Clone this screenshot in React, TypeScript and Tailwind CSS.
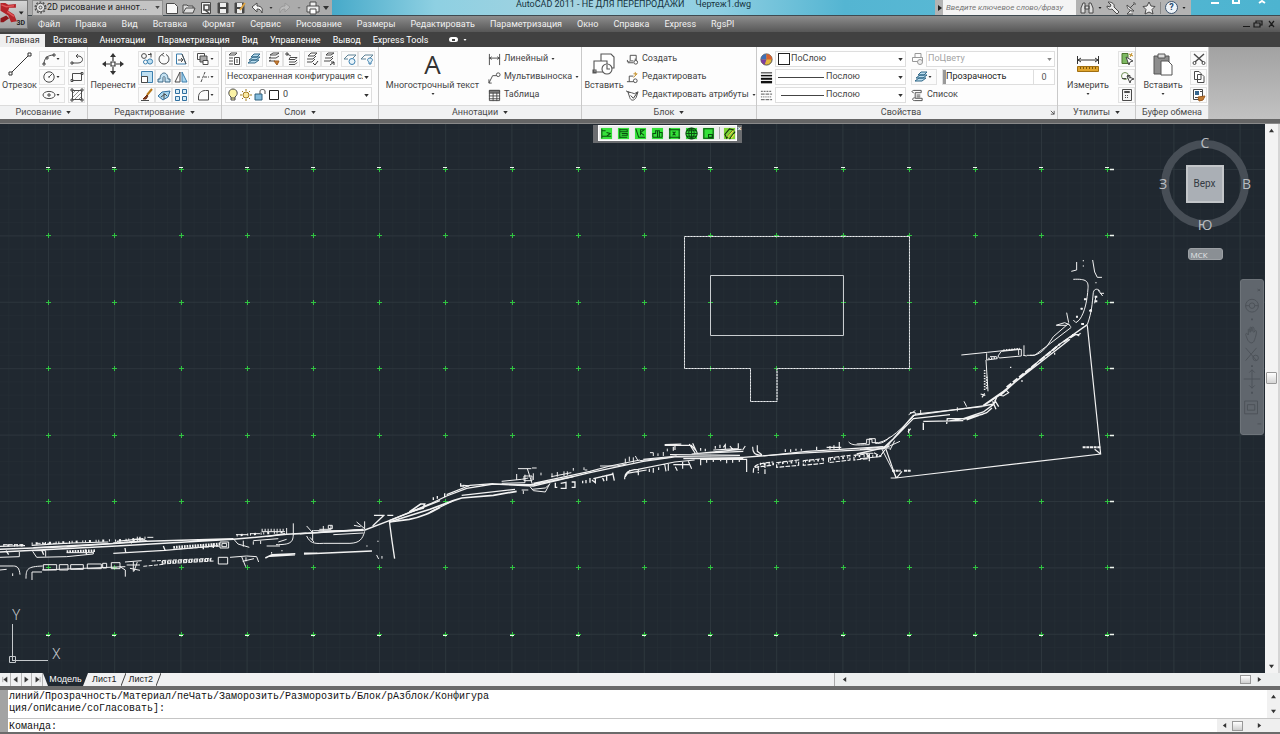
import type { ReactNode } from "react";

const menuItems = [
  "Файл", "Правка", "Вид", "Вставка", "Формат", "Сервис", "Рисование", "Размеры",
  "Редактировать", "Параметризация", "Окно", "Справка", "Express", "RgsPl",
];

const ribbonTabs = ["Вставка", "Аннотации", "Параметризация", "Вид", "Управление", "Вывод", "Express Tools"];

const gridX = Array.from({ length: 17 }, (_, i) => Math.round(48.2 + i * 66.2));
const gridY = Array.from({ length: 8 }, (_, i) => Math.round(169 + i * 66.4));

function Icon({ children, className = "h-[14px] w-[14px]" }: { children: ReactNode; className?: string }) {
  return (
    <svg viewBox="0 0 14 14" className={`shrink-0 ${className}`} fill="none" stroke="#4a4a4a" strokeWidth="1" aria-hidden="true">
      {children}
    </svg>
  );
}

function Caret({ className = "h-[3px] w-[5px] text-[#333]" }: { className?: string }) {
  return (
    <svg viewBox="0 0 6 4" className={`shrink-0 ${className}`} fill="currentColor" aria-hidden="true">
      <path d="M0 0H6L3 4Z" />
    </svg>
  );
}

const icons = {
  arc: <path d="M2 12C2 6 6 3 12 3M1 11h2v2H1zM11 2h2v2h-2zM4 5h2v2H4z" />,
  circle: <><circle cx="7" cy="7" r="5.2" /><path d="M7 7l3-3M6 7h2" /></>,
  ellipse: <><ellipse cx="7" cy="7" rx="6" ry="3.6" /><path d="M7 5v4M5 7h4" /></>,
  pline: <path d="M2 11h6c6 0 6-7 0-7H6M1 10h2v2H1zM8 2L6 4l2 2" />,
  rect: <path d="M2.500 3.500h9v7h-9zM1 9.500h2v2H1zM11 2.500h2v2h-2z" />,
  hatch: <><path d="M2.500 2.500h9v9h-9z" /><path d="M2 6l4-4M2 10l8-8M4 12l8-8M8 12l4-4" strokeWidth=".6" /><path d="M1 1h2v2H1zM11 1h2v2h-2zM1 11h2v2H1zM11 11h2v2h-2z" /></>,
  copy: <><circle cx="4" cy="4" r="2.400" /><path d="M8 2.500h3v3M10 1l2 1.500" /><g stroke="#3c7fae"><circle cx="5.500" cy="10" r="2" /><circle cx="10" cy="9.500" r="2.600" fill="#bfe0f2" /></g></>,
  rotate: <path d="M5 2.500A5 5 0 1 0 9 2.500M7 1L5 2.500l2 2" />,
  stretch: <><path d="M2.500 2v10H12L8 2z" stroke="#3c7fae" /><path d="M8 2l4 10M4 8h5M7 6l2 2-2 2" /></>,
  overlap: <><path d="M1.500 1.500h7v6h-7z" /><path d="M4 4h7v6H4z" fill="#aaa" /><path d="M7 8.500h5v4H7z" fill="#fff" /></>,
  scale: <><path d="M1.500 1.500h11v11h-11z" fill="#bfe0f2" stroke="#3c7fae" /><path d="M1.500 6.500h6v6h-6z" fill="#fff" /></>,
  offset: <><path d="M1 12V9h2C3 1 11 1 11 9h2v3H8V8c0-2-2-2-2 0v4z" fill="#c6e3f3" stroke="#3a6684" /></>,
  mirror: <><path d="M6 2v10H1z" /><path d="M8 2v10h5z" fill="#a9d6ee" stroke="#3c7fae" /></>,
  trim: <path d="M1 7h4M8 7h5M5 12L9 2" strokeDasharray="3 1" />,
  erase: <><path d="M12 1L7 7" stroke="#b87818" strokeWidth="2" /><path d="M7 7l-4 4h3l2-3z" fill="#8a3d1d" stroke="#6b2d12" /><path d="M1 12.500h8" /></>,
  explode: <><path d="M1 8l4-4 8-1-2 6-5 3z" fill="#a9d6ee" stroke="#2f6f9f" /><path d="M4 9l4-3 2 2M7 5v6" /></>,
  array: <g fill="#d6ebf6" stroke="#2f6f9f"><path d="M1.500 1.500h4v4h-4zM8.500 1.500h4v4h-4zM1.500 8.500h4v4h-4zM8.500 8.500h4v4h-4z" /></g>,
  fillet: <path d="M2.500 12V9c0-4 3-6.500 7-6.500h3V12z" />,
  layer1: <><path d="M2 3l2-2h6L8 3zM2 6h4M2 9h4M2 12h4" /><path d="M7.500 5.500h5v7h-5z" fill="#fff" /><path d="M9 8h2M9 10h2" /></>,
  layer2: <g stroke="#2f6787" fill="#b9dcee"><path d="M1 11l4-3h7l-4 3zM2 8l4-3h7L9 8zM4 5l3-3h6l-3 3z" /></g>,
  layer3: <><path d="M2 3l3-2h6L8 3zM1 6l2-1M1 9l2-1M1 6h7l3-2M1 9h6" /><path d="M6 9h5l-2 4z" fill="#c87f35" stroke="#9b5a1f" /></>,
  layer4: <path d="M5 5.500h7l-2 2H4zM4 10h6l2-2M4 12.500h6l2-2M6 4L2 2M1 1h2v2H1z" />,
  layer5: <><path d="M3 4l3-3h6L9 4zM2 7h6l3-3M2 10h5l3-3" /><path d="M8 11l2 2 3-4" stroke="#333" /></>,
  layer6: <><path d="M4 3l2-2h6l-3 2zM3 6h6l2-2M2 9h6l3-3" /><path d="M8 13l4-3M9 10h3v3" stroke="#333" /></>,
  layer7: <><path d="M1 7l4-4h8l-3 3M1 7h4" stroke="#5c8195" /><circle cx="9" cy="9.500" r="3" fill="#e9f4fa" stroke="#3c7fae" /></>,
  layer8: <><path d="M1 7l4-4h8l-3 3M1 7h5" stroke="#5c8195" /><path d="M10 6c3 0 3 3 1 4v2H9v-2C7 9 7 6 10 6z" fill="#dfeef5" stroke="#3c7fae" /></>,
  linear: <path d="M1.500 1v12M12.500 1v12M1 5.500h12M4 4L2 5.500 4 7M10 4l2 1.500L10 7" />,
  leader: <><path d="M1 13L5 5h4M1 9v4h3" /><circle cx="11" cy="4" r="2" /></>,
  table: <><path d="M1.500 1.500h11v11h-11zM1 4.500h12M1 7.500h12M1 10.500h12M5.500 4v9M9.500 4v9" /><path d="M1.500 1.500h11v2h-11z" fill="#888" /></>,
  blockCreate: <><path d="M4 9.500H1.500v-2M4.500 8V2.500H11V8M4 8.500h4M2 10.500h6M10 6v2" /><circle cx="10.500" cy="10" r="2" fill="#fff" /></>,
  blockEdit: <><path d="M3.500 5.500H8M3.500 5.500v6M1 11.500h7" /><path d="M8 7l4-4M10 1v4M8 3h4" stroke="#c6922d" /><circle cx="10" cy="10.500" r="2" /></>,
  attribute: <><path d="M2 3l2 6c1 4 5 4 7 0l2-6-4 2-3-1zM0 2l4 2" /><path d="M5 7l3 3 4-6" stroke="#2d2d2d" /></>,
  lineweight: <g stroke="#111"><path d="M1 2h12" /><path d="M1 5h12" strokeWidth="1.600" /><path d="M1 8.400h12" strokeWidth="2.200" /><path d="M1 12h12" strokeWidth="2.600" /></g>,
  linetype: <><path d="M1 2.500h12" strokeDasharray="2 1" /><path d="M1 5.500h12M1 11.500h12" strokeDasharray="4 1" /><path d="M1 8.500h12" strokeDasharray="1 1" /></>,
  plot: <g stroke="#999"><path d="M4 5V1.500h6V5M1.500 5.500h10v4h-10z" /><circle cx="9" cy="10" r="2.500" fill="#eee" /></g>,
  list: <path d="M3 1.500h8V4H4.500v6H12v2.500H4c-3 0-3-3 0-3M6 6.500h4M6 8.500h4M3 1.500C0 2 1 4 3 4" />,
  quick: <><path d="M2 1.500h6v10H2z" fill="#7dba62" stroke="#4d742f" /><path d="M6 5l3 8 1-3 3-1z" fill="#fff" /><path d="M12 1l-2 4M9 2l4 2" stroke="#c08a1a" /></>,
  selectAll: <><circle cx="5" cy="6" r="3.500" stroke="#719057" /><path d="M2 8.500h4M7 5.500h3v3M7 6l3 7 1-3 3-1z" fill="#fff" /></>,
  calc: <><path d="M2.500 1.500h9v11h-9z" fill="#f3f3f3" /><path d="M4.500 3.500h5v1h-5z" /><path d="M5 7.500h4M5 9.500h4" strokeDasharray="1 1" /></>,
  cut: <><path d="M2 2l9 8M12 2L3 10" strokeWidth="1.400" /><circle cx="2.500" cy="11" r="1.500" /><circle cx="11.500" cy="11" r="1.500" /></>,
  copyClip: <path d="M2.500 1.500H7l2 2v6H2.500zM5.500 4.500H10l2 2v6H5.500z" fill="#fff" />,
  match: <><path d="M1.500 1.500h9v10h-9z" fill="#fff" /><path d="M3 3h4v4H3z" fill="#35658e" stroke="none" /><path d="M8 3.500h2M3 9.500h4" /><path d="M6 9l7-1-2 4-4 1z" fill="#c27a30" stroke="#9b5a1f" /></>,
};

type IconName = keyof typeof icons;

function Tool({ name, label, wide = false }: { name: IconName; label: string; wide?: boolean }) {
  return (
    <button
      type="button"
      aria-label={label}
      className={`flex h-4 items-center justify-center border border-[#e2e2e2] bg-[#fbfbfb] ${wide ? "w-[26px] justify-between pr-[3px] pl-px" : "w-[17px]"}`}
    >
      <Icon>{icons[name]}</Icon>
      {wide ? <Caret className="h-[2px] w-[4px] text-[#333]" /> : null}
    </button>
  );
}

function LineTool({ name, label, caret = false }: { name: IconName; label: string; caret?: boolean }) {
  return (
    <button type="button" className="flex h-4 items-center gap-[3px] whitespace-nowrap">
      <Icon className="h-[13px] w-[13px]">{icons[name]}</Icon>
      <span>{label}</span>
      {caret ? <Caret className="h-[2px] w-[4px] text-[#333]" /> : null}
    </button>
  );
}

function BigTool({ label, caret = false, className, children }: { label: string; caret?: boolean; className: string; children: ReactNode }) {
  return (
    <button type="button" className={`flex h-[52px] shrink-0 flex-col items-center whitespace-nowrap ${className}`}>
      <span className="flex h-[26px] items-center justify-center">{children}</span>
      <span className="leading-4">{label}</span>
      {caret ? <Caret className="h-[2px] w-[4px] text-[#333]" /> : null}
    </button>
  );
}

function Panel({ title, className, caret = true, launcher = false, children }: { title: string; className: string; caret?: boolean; launcher?: boolean; children: ReactNode }) {
  return (
    <section className={`flex shrink-0 flex-col border-r border-[#c9c9c9] bg-[#fdfdfd] ${className}`}>
      <div className="flex h-[58px] items-start pt-1">{children}</div>
      <h2 className="flex h-[14px] items-center justify-center gap-[5px] border-t border-[#dcdcdc] bg-[#f1f2f3] text-[#4a4a4a]">
        <span className={launcher ? "flex-1 text-center" : ""}>{title}</span>
        {caret ? <Caret /> : null}
        {launcher ? (
          <svg viewBox="0 0 6 6" className="mr-[2px] h-[5px] w-[5px]" stroke="#444" fill="none" aria-hidden="true">
            <path d="M1 1l4 4M5 1v4H1" />
          </svg>
        ) : null}
      </h2>
    </section>
  );
}

function Combo({ label, value, className = "", before, disabled = false, selectClass = "pl-[3px]" }: { label: string; value: string; className?: string; before?: ReactNode; disabled?: boolean; selectClass?: string }) {
  return (
    <div className={`relative flex h-4 items-center border border-[#dedede] bg-white ${className}`}>
      {before}
      <select aria-label={label} disabled={disabled} className={`min-w-0 flex-1 appearance-none bg-transparent disabled:text-[#a5a5a5] disabled:opacity-100 ${selectClass}`}>
        <option>{value}</option>
      </select>
      <Caret className={`pointer-events-none absolute right-[2px] h-[3px] w-[5px] ${disabled ? "text-[#888]" : "text-[#333]"}`} />
    </div>
  );
}

function QuickAccess() {
  return (
    <div className="flex items-center gap-[3px] text-[#333]">
      <Icon><path d="M1.500 2.500h8l3 3v7h-11z" fill="#f8f8f8" /></Icon>
      <Icon><path d="M1 12V4h4l1 1h5v2M1 12l3-5h9l-2 5z" fill="#ddd" /></Icon>
      <Icon><path d="M2.500 1.500h9v11h-9z" fill="#f5f5f5" /><path d="M5 4h5v5H5zM6 9l5 4" strokeWidth="1.600" /></Icon>
      <Icon><path d="M2 2h10v10H2z" fill="#454545" /><path d="M4 2h6v4H4zM4 8h6v4H4z" fill="#eee" stroke="none" /></Icon>
      <Icon><path d="M2 2h9v10H2z" fill="#454545" /><path d="M4 2h5v4H4zM4 8h5v4H4z" fill="#eee" stroke="none" /><path d="M7 9l5-7" stroke="#dca343" strokeWidth="2" /></Icon>
      <Icon><path d="M2 6l5-4v3c5 0 6 3 5 7-1-3-2-4-5-4v3z" fill="#f5f5f5" /></Icon>
      <Caret className="mx-[2px] h-[2px] w-[4px]" />
      <Icon><path d="M12 6L7 2v3C2 5 1 8 2 12c1-3 2-4 5-4v3z" fill="#bbb" stroke="#999" /></Icon>
      <Caret className="mx-[2px] h-[2px] w-[4px] text-[#777]" />
      <Icon><path d="M4 5V1h6v4M1 5h12v6H1z" fill="#eee" /><path d="M4 8h6v5H4z" fill="#fff" /></Icon>
      <Caret className="h-[4px] w-[6px]" />
    </div>
  );
}

function TitleBar() {
  return (
    <header className="flex h-4 items-stretch border-b border-[#3f4a50] bg-[linear-gradient(90deg,#3ea5c6_25%,#8ed0e2_34%,#a5d3e0_45%,#8fcfe2_56%,#54b5d2_66%,#58b8d4_74%,#4db4d0_100%)]">
      <div className="flex w-[332px] items-center bg-[#ababab] pl-8">
        <div className="relative mr-[2px] flex h-4 w-[131px] items-center border border-[#909090] bg-[#c4c4c4]">
          <Icon className="ml-px h-[13px] w-[13px]">
            <circle cx="7" cy="7" r="5.800" strokeDasharray="2 1.640" strokeWidth="1.400" />
            <circle cx="7" cy="7" r="4.500" fill="#e5e5e5" />
            <circle cx="7" cy="7" r="1.600" />
          </Icon>
          <select aria-label="Рабочее пространство" className="min-w-0 flex-1 appearance-none text-[9px] text-[#222]">
            <option>2D рисование и аннот...</option>
          </select>
          <Caret className="pointer-events-none absolute right-[2px] h-[3px] w-[5px]" />
        </div>
        <QuickAccess />
      </div>
      <h1 className="flex flex-1 justify-center gap-[11px] leading-[9px] whitespace-nowrap text-[#16323d]">
        <span>AutoCAD 2011 - НЕ ДЛЯ ПЕРЕПРОДАЖИ</span>
        <span>Чертеж1.dwg</span>
      </h1>
      <div className="flex w-[256px] items-center gap-1 bg-[#b3b3b3] text-[#222]">
        <svg viewBox="0 0 4 6" className="ml-[3px] h-[6px] w-[4px] shrink-0 -mr-[3px]" fill="#222" aria-hidden="true"><path d="M0 0L4 3L0 6Z" /></svg>
        <input
          type="text"
          aria-label="Поиск"
          placeholder="Введите ключевое слово/фразу"
          className="h-full w-[133px] bg-[#f4f4f4] pl-[3px] text-[8px] italic placeholder:text-[#777]"
        />
        <Icon><path d="M1 12V7l2-5h2v10zM13 12V7l-2-5H9v10zM5 5h4v3H5z" fill="#ddd" /></Icon>
        <Caret className="h-[2px] w-[4px]" />
        <Icon><path d="M2 1l3 3-1 2-3-1c0 3 3 4 5 3l5 5 2-2-5-5c1-3-2-5-6-5z" fill="#eee" /></Icon>
        <Icon><path d="M3 4c0 4 3 6 7 6zM6 7l4-4M6 10l-3 3h6M9 2h2v2" fill="#eee" /></Icon>
        <Icon><path d="M7 1l2 4 4 .5-3 3 1 4.500-4-2-4 2 1-4.500-3-3L5 5z" fill="#eee" /></Icon>
        <span className="h-3 w-px bg-[#888]" />
        <span className="flex h-[13px] w-[13px] items-center justify-center rounded-full border border-[#3c536d] bg-[#eef3f8] text-[9px] leading-[11px] font-bold text-[#24496f]">?</span>
        <Caret className="h-[2px] w-[4px]" />
      </div>
      <div className="flex w-[89px] justify-end pr-[8px] text-white">
        <svg viewBox="0 0 66 5" className="h-[5px] w-[66px]" fill="none" stroke="currentColor" strokeWidth="2" aria-hidden="true">
          <path d="M5 3h8M27 0v3h6V0M53 3l3-2 3 2" />
        </svg>
      </div>
    </header>
  );
}

function MenuBar() {
  return (
    <nav className="flex h-4 items-center gap-[15px] bg-linear-to-b from-[#8d8d8d] to-[#575757] pl-[38px] text-[#f0f0f0]">
      {menuItems.map((item) => (
        <button key={item} type="button" className="leading-4 whitespace-nowrap">
          {item}
        </button>
      ))}
      <svg viewBox="0 0 34 10" className="mr-1 ml-auto h-[10px] w-[34px]" fill="none" stroke="#1a1a1a" strokeWidth="1.200" aria-hidden="true">
        <path d="M1 7.500h7M12 4h6v4h-6zM14 4V2h6v4h-2M27 2l5 6M32 2l-5 6" />
      </svg>
    </nav>
  );
}

function RibbonTabs() {
  return (
    <nav className="flex h-[15px] items-center bg-[#414141] text-white">
      <button type="button" className="mt-[2px] h-[13px] w-[45px] bg-[#efefef] text-center leading-[13px] text-[#333]">Главная</button>
      <div className="flex gap-3 pl-2">
        {ribbonTabs.map((tab) => (
          <button key={tab} type="button" className="leading-4 whitespace-nowrap">{tab}</button>
        ))}
      </div>
      <span className="ml-[21px] flex h-[5px] w-[9px] items-center justify-center rounded-sm bg-white">
        <span className="h-[2px] w-[3px] bg-[#444]" />
      </span>
      <Caret className="ml-[5px] h-[2px] w-[4px]" />
    </nav>
  );
}

function Ribbon() {
  return (
    <div className="flex h-[72px] bg-linear-to-b from-[#a2a2a2] to-[#c2c2c2]">
      <Panel title="Рисование" className="w-[88px]">
        <BigTool label="Отрезок" className="w-[39px]">
          <svg viewBox="0 0 24 24" className="h-6 w-6" fill="#fff" stroke="#333" aria-hidden="true">
            <path d="M3 21L21 3" /><path d="M1 20h3v3H1zM20 1h3v3h-3z" />
          </svg>
        </BigTool>
        <div className="grid grid-cols-[29px_17px] gap-y-[2px]">
          <Tool name="arc" label="Дуга" wide /><Tool name="pline" label="Полилиния" />
          <Tool name="circle" label="Круг" wide /><Tool name="rect" label="Прямоугольник" />
          <Tool name="ellipse" label="Эллипс" wide /><Tool name="hatch" label="Штриховка" />
        </div>
      </Panel>

      <Panel title="Редактирование" className="w-[134px]">
        <BigTool label="Перенести" className="w-[50px]">
          <svg viewBox="0 0 22 22" className="h-[22px] w-[22px]" fill="none" stroke="#333" strokeWidth="1.200" aria-hidden="true">
            <path d="M9 9h4v4H9zM11 8V3M11 14v5M8 11H3M14 11h5" />
            <path d="M8 4h6l-3-4zM8 18h6l-3 4zM4 8v6l-4-3zM18 8v6l4-3z" fill="#333" stroke="none" />
          </svg>
        </BigTool>
        <div className="grid grid-cols-[17px_17px_21px_26px] gap-y-[2px]">
          <Tool name="copy" label="Копировать" /><Tool name="rotate" label="Повернуть" /><Tool name="stretch" label="Растянуть" /><Tool name="overlap" label="Порядок" wide />
          <Tool name="scale" label="Масштаб" /><Tool name="offset" label="Подобие" /><Tool name="mirror" label="Зеркало" /><Tool name="trim" label="Обрезать" wide />
          <Tool name="erase" label="Стереть" /><Tool name="explode" label="Расчленить" /><Tool name="array" label="Массив" /><Tool name="fillet" label="Сопряжение" wide />
        </div>
      </Panel>

      <Panel title="Слои" className="w-[157px]">
        <div className="flex flex-1 flex-col gap-[2px] px-[3px]">
          <div className="flex justify-between">
            <Tool name="layer1" label="Свойства слоя" />
            <Tool name="layer2" label="Текущий слой" />
            <div className="flex"><Tool name="layer3" label="Изолировать" /><Tool name="layer4" label="Предыдущий" /></div>
            <div className="flex"><Tool name="layer5" label="Включить" /><Tool name="layer6" label="Перенести на слой" /></div>
            <div className="flex"><Tool name="layer7" label="Заморозить слой" /><Tool name="layer8" label="Отключить слой" /></div>
          </div>
          <Combo label="Состояние слоев" value="Несохраненная конфигурация сл" className="w-[147px]" selectClass="mr-2 pl-px" />
          <Combo
            label="Слой"
            value="0"
            className="w-[147px]"
            before={
              <svg viewBox="0 0 54 14" className="h-[14px] w-[54px] shrink-0" fill="none" stroke="#4a4a4a" aria-hidden="true">
                <path d="M5 9C1 6 3 1 7 1s6 5 2 8v3H5zM5 10h4" fill="#fbf3a5" />
                <circle cx="20" cy="7" r="3" fill="#fbe9a0" stroke="#a17a1d" />
                <path d="M20 1v2M20 11v2M14 7h2M24 7h2M16 3l1 1M23 10l1 1M24 3l-1 1M17 10l-1 1" stroke="#a17a1d" />
                <path d="M29 6h7v6h-7z" fill="#85bcdc" stroke="#2e617f" /><path d="M34 6V3c0-2 5-2 5 0v3" />
                <path d="M43.500 2.500h9v9h-9z" fill="#fff" stroke="#222" />
              </svg>
            }
          />
        </div>
      </Panel>

      <Panel title="Аннотации" className="w-[203px]">
        <BigTool label="Многострочный текст" caret className="w-[107px]">
          <span className="font-['Open_Sans',sans-serif] text-[26px] leading-[26px] text-[#333]">A</span>
        </BigTool>
        <div className="flex flex-col gap-[2px] pl-[2px]">
          <LineTool name="linear" label="Линейный" caret />
          <LineTool name="leader" label="Мультивыноска" caret />
          <LineTool name="table" label="Таблица" />
        </div>
      </Panel>

      <Panel title="Блок" className="w-[175px]">
        <BigTool label="Вставить" className="w-11">
          <svg viewBox="0 0 24 24" className="h-6 w-6" fill="#fff" stroke="#555" strokeWidth="1.100" aria-hidden="true">
            <path d="M9 2h10l3 3v11H9z" /><path d="M2 9h13v11H2zM1 18h3v3H1z" /><circle cx="15" cy="17" r="5" /><path d="M15 13v4h3" />
          </svg>
        </BigTool>
        <div className="flex flex-col gap-[2px]">
          <LineTool name="blockCreate" label="Создать" />
          <LineTool name="blockEdit" label="Редактировать" />
          <LineTool name="attribute" label="Редактировать атрибуты" caret />
        </div>
      </Panel>

      <Panel title="Свойства" className="w-[301px]" caret={false} launcher>
        <div className="grid flex-1 grid-cols-[15px_131px_5px_15px_1fr] items-center gap-y-[2px] pr-[2px] pl-[3px]">
          <Icon className="h-[13px] w-[13px]">
            <circle cx="7" cy="7" r="6" fill="#e3b83c" />
            <path d="M7 7L1 7A6 6 0 0 1 7 1z" fill="#3d6fb8" stroke="none" />
            <path d="M7 7V1A6 6 0 0 1 13 7z" fill="#d9612f" stroke="none" />
            <path d="M7 7H1A6 6 0 0 0 5 12.600z" fill="#7a3d9e" stroke="none" />
          </Icon>
          <Combo label="Цвет" value="ПоСлою" before={<span className="ml-[2px] h-[12px] w-[12px] shrink-0 border border-[#222] bg-white" />} selectClass="pl-px" />
          <span />
          <Icon>{icons.plot}</Icon>
          <Combo label="Стиль печати" value="ПоЦвету" disabled selectClass="pl-px" />

          <Icon className="h-[13px] w-[13px]">{icons.lineweight}</Icon>
          <Combo label="Вес линий" value="Послою" before={<span className="ml-[2px] h-px w-[46px] shrink-0 bg-[#444]" />} selectClass="pl-[2px]" />
          <span />
          <div className="col-span-2 flex justify-between">
            <Tool name="layer2" label="Прозрачность слоя" wide />
            <div className="flex h-4 w-[113px] items-center border border-[#dedede] bg-white text-[#222]">
              <label htmlFor="transparency" className="flex h-full flex-1 items-center border-l-[3px] border-[#999]">Прозрачность</label>
              <input id="transparency" type="text" defaultValue="0" className="h-full w-[21px] border-l border-[#dedede] text-center text-[#555]" />
            </div>
          </div>

          <Icon className="h-[13px] w-[13px]">{icons.linetype}</Icon>
          <Combo label="Тип линий" value="Послою" before={<span className="ml-[5px] h-px w-[43px] shrink-0 bg-[#444]" />} selectClass="pl-[2px]" />
          <span />
          <div className="col-span-2"><LineTool name="list" label="Список" /></div>
        </div>
      </Panel>

      <Panel title="Утилиты" className="w-[78px]">
        <BigTool label="Измерить" caret className="w-[60px]">
          <svg viewBox="0 0 24 18" className="h-[18px] w-6" fill="none" stroke="#333" aria-hidden="true">
            <path d="M1.500 1v8M22.500 1v8M2 5h20M5 3L2 5l3 2M19 3l3 2-3 2" />
            <path d="M1.500 11.500h21v5h-21z" fill="#e0a52e" stroke="#a06f12" /><path d="M4.500 12v2M7.500 12v2M10.500 12v2M13.500 12v2M16.500 12v2M19.500 12v2" stroke="#7c560c" />
          </svg>
        </BigTool>
        <div className="flex flex-col gap-[2px]">
          <Tool name="quick" label="Быстрый выбор" /><Tool name="selectAll" label="Выбрать все" /><Tool name="calc" label="Калькулятор" />
        </div>
      </Panel>

      <Panel title="Буфер обмена" className="w-[73px]" caret={false}>
        <BigTool label="Вставить" caret className="w-[54px]">
          <svg viewBox="0 0 22 24" className="h-6 w-[22px]" stroke="#555" aria-hidden="true">
            <path d="M2 4h15v18H2z" fill="#8d8d8d" /><path d="M6 2h7v4H6z" fill="#ddd" /><path d="M9 9h7l4 4v10H9z" fill="#fff" />
          </svg>
        </BigTool>
        <div className="flex flex-col gap-[2px]">
          <Tool name="cut" label="Вырезать" /><Tool name="copyClip" label="Копировать в буфер" /><Tool name="match" label="Копирование свойств" />
        </div>
      </Panel>
    </div>
  );
}

/* Survey drawing: coordinates are window pixels, the local groups are at triple scale */
function Drawing() {
  return (
    <svg viewBox="0 124 1265 549" preserveAspectRatio="xMinYMin slice" className="absolute inset-0 h-full w-full" fill="none" role="img" aria-label="Чертеж">
      <defs>
        <pattern id="minor" x="48" y="169" width="13.240" height="13.280" patternUnits="userSpaceOnUse">
          <path d="M0 0H13.240M0 0V13.280" stroke="#252e35" />
        </pattern>
        <pattern id="major" x="48" y="169" width="66.200" height="66.400" patternUnits="userSpaceOnUse">
          <path d="M0 0H66.200M0 0V66.400" stroke="#2e383e" strokeWidth="1.600" />
        </pattern>
      </defs>
      <rect y="124" width="1265" height="549" fill="url(#minor)" />
      <rect y="124" width="1265" height="549" fill="url(#major)" />

      {gridY.map((y) =>
        gridX.map((x) => <path key={`${x}-${y}`} d={`M${x - 2} ${y + 0.5}h5M${x + 0.5} ${y - 2}v5`} stroke="#30c441" />),
      )}
      <g stroke="#eef5ee">
        {gridX.map((x) => <path key={x} d={`M${x - 2} 167.500h4M${x - 2} 635.500h4`} />)}
        {gridY.map((y) => <path key={y} d={`M1110 ${y + 0.5}h4`} strokeWidth="1.500" />)}
      </g>

      <g stroke="#e8ebed">
        <path d="M684.500 236.500H909.500V368.500H777V401.500H750.500V368.500H684.500Z" stroke="#8d9499" />
        <path d="M684.500 236.500H909.500V368.500H777V401.500H750.500V368.500H684.500Z" strokeDasharray="2 1" />
        <path d="M710.500 275.500h133v60h-133z" stroke="#c9cdd0" />
      </g>

      {/* west section */}
      <g transform="translate(0 500) scale(.3333)" stroke="#f2f2f2" strokeWidth="3.500">
        <path d="M0 156L350 138 700 118 860 103 1095 90 1168 62 1320 2M0 148L200 140 440 124 700 116" strokeWidth="4.500" />
        <path d="M0 139l75-2M95 136l120-7 110-3M100 143l240-13 100-8M350 124l80-8M340 160l155-9 160-14M800 110l55-9M880 102l40-3M900 102l190-14" />
        <path d="M0 172l58-2v-14M98 154l12 18 90-2 80-8v-8M200 158h80M97 152h40v18" strokeWidth="3" />
        <path d="M200 155l85-3M520 142l140-10M485 187l150-8" strokeWidth="8" strokeDasharray="5 3" />
        <path d="M520 148l145-10M485 192l158-9M430 199l60-6M455 183l180-8M340 129l90-6M10 134h60M110 130h100" strokeWidth="3" strokeDasharray="12 4" />
        <path d="M95 131l240-10M10 136h60M345 122l80-6M710 106l140-10" strokeWidth="7" strokeDasharray="3 9 6 14 3 5" />
        <path d="M375 144l2 12M490 138l6 14M405 118l-12 12M420 110v14M18 152l8 12M125 150l6 14M256 148l4 16M610 134v14M640 130v14" strokeWidth="4" />
        <path d="M660 126h26v18h-26zM666 130h14v10h-14zM655 172h28v20h-28zM130 194h40v16h-40zM178 194h26v16h-26zM212 194h38v14h-38zM262 192h42v14h-42zM334 188h26v18h-26zM308 190h12v14h-12z" strokeWidth="3" />
        <path d="M78 236c0-30 4-36 50-38M96 240v-24h30M126 210l250-10M360 200l16 10v20M0 198h40c12 0 18 6 20 26M0 210l20-2M38 220v8M375 186l50-4M380 195h40M390 205l30 6M400 185v30M412 186l-10 28" strokeWidth="3" />
        <path d="M405 118h30v-8M412 110v14M442 112h18M708 104h36M750 101h30M785 95h70M860 84v20M880 70v30c0 28-8 34-52 34M700 116l14 16 34 10M730 122v18M760 124v10M782 122v10M760 122l75-6M800 138h40M835 126l25-8" strokeWidth="3" />
        <path d="M785 90h70" strokeWidth="8" strokeDasharray="3 6" />
        <path d="M920 108c10 20 20 24 50 22h80c28-1 38-12 44-36M930 112l12 14M920 78l18 20M938 90v30M958 88h35v-12M970 78v14M985 76h12v10h-12zM1070 66l24 20M1094 64v24M1062 76l20 4M955 96l135-8" strokeWidth="3" />
        <path d="M940 92h150M1000 104l90-5" strokeWidth="3" />
        <path d="M796 174l20-10 70-3M810 169l75-5M912 162l204-9M912 160h40" strokeWidth="4.500" />
        <path d="M690 172l50-4 30 2 6 16M725 170l12 30M728 184l34-8M738 172v12M1130 165l6 12M1146 168v8M1101 136v4M1134 122v4M815 156v5M846 150v4" strokeWidth="3" />
        <path d="M1122 46h32M1162 46h18M1118 78l34-32M1168 62l8 60 8 54" strokeWidth="4" />
        <path d="M1168 66l60-8c40-8 62-20 92-36M1228 36l34-24h12l-4 12z" strokeWidth="5" />
      </g>

      {/* middle section */}
      <g transform="translate(430 420) scale(.3333)" stroke="#f2f2f2" strokeWidth="3.500">
        <path d="M-122 302L0 252 50 228 110 205 190 192 310 198 480 158 640 124 740 110 940 112 1100 100 1360 86" strokeWidth="4" />
        <path d="M-122 306L0 268 70 242 95 234 190 226 260 214" strokeWidth="5" />
        <path d="M0 276l70-34M50 224l70-28 70-5M190 192l120 2 120-24M310 190l170-36 60-16 90-18M95 226l160-18M640 118l100-10M720 104l210 2" />
        <path d="M300 200l10 12 36 4 14-26M306 208l40-4 12-10M264 146h40M306 144h14M292 146l16 50M215 184l60-6 20-4M215 190l70-2v-24M260 162v18M282 168h24v14h-24zM310 160v20M333 158v8M275 210h20M280 212v10" strokeWidth="3" />
        <path d="M10 240v-8M22 236v-8M44 232v-12M92 190v8h10M98 196l20 2" strokeWidth="4" />
        <path d="M366 172v-12M382 170v-14M402 168v-14M412 166v-12M430 144v8M462 142v8M364 170l60-12M464 150h8" strokeWidth="3" />
        <path d="M376 188v14h6M392 190l16-3v18h-16M425 186h10v16h-10M458 182v8M468 180v10M480 174v14M486 180l10 8v-12M516 168l6 16M530 164v18M548 158l5 24M490 176l60-14" strokeWidth="4" />
        <path d="M510 138h50l30-6M586 130v-14M598 124v-14M610 128v-16M616 108l8 14M660 98h10v10M684 100v8M700 96v12M712 86v8M630 122l90-10" strokeWidth="3" />
        <path d="M584 178c0-20 10-28 40-30l110-22 60-6M590 160l60-10M600 150l-14 20M625 150v16M658 146v10M670 144v14M686 142v8M704 132l4 22M715 130v22M730 134h50M736 140l6 12M758 126v20M775 124l10 22" strokeWidth="3.500" />
        <path d="M704 76h80l14 16-10-22M704 74l50-2M778 72l18 28M790 74l12 26M735 72v18M730 92v-12M785 102l60-6 90-8M850 90l75-4M856 86v-8M870 84v-10M880 82l6-8v12M900 78l8 10M925 70v16M938 90l8-12M812 92v-8M826 94v-8M800 100l140-6" strokeWidth="3.500" />
        <path d="M810 118h140v38M812 120v16M830 116v12M850 116v10M872 118v6M890 116v14M908 118v10M928 118v8M760 116h180" strokeWidth="3.500" />
        <path d="M968 80c0 16 4 26 28 26M982 76v18l14 10M1000 108l130-14 100-6 130-8M1066 96v-8M1082 96v-8M1098 92v-6M1114 92v-6M1160 90v-10M1200 78v10M1212 76v10M1228 66v20M1190 82h44" strokeWidth="3.500" />
        <path d="M970 158c0-22 4-26 60-32M974 142l50-6M985 138v22M1005 130v32M1040 128l66-8v16l-66 6zM1120 122l60-6v14l-60 6zM1196 114l64-8v14l-64 8zM1272 106l40-4v14l-40 4zM1318 102v20M1332 98l22 12" strokeWidth="3.500" strokeDasharray="14 4" />
        <path d="M990 132h50M1045 130l55-4M1125 124l50-4M1200 118l55-6M1275 108h70" strokeWidth="7" strokeDasharray="3 8 5 10" />
        <path d="M1256 66c10 10 20 10 62 8v-18h18v14c20 2 32-6 44-20M1350 110l30-40M1355 84h25" strokeWidth="3" />
      </g>

      {/* east section */}
      <g transform="translate(860 240) scale(.3333)" stroke="#f2f2f2" strokeWidth="3.500">
        <path d="M-10 642L70 624 100 596 160 526 370 498 430 458 540 360 600 312 682 254M70 628l90-92 110-12M370 496l60-42 200-156" strokeWidth="4" />
        <path d="M-10 612l30-2v-12h16v10h20c36-8 70-44 112-86l200-22M0 628l78-8M0 640h40M0 656l60-6 14-20M28 642v22M80 622l40-18M90 630l14-28M64 624l46 90M146 524l20-12M150 518h16v8M182 510v10M292 502v12M312 484l8 16" strokeWidth="3" />
        <path d="M190 544h70l50-8 60-20 30-22M190 548v22M200 544l110-2M262 534l-2 18M310 538l60-16M320 540l60-22 16-14M370 498l32-6 8-20M398 484l10 24M404 480l12 20M262 536h50" strokeWidth="4" />
        <path d="M304 345l78-8 94-10v18M380 340v20l32-4M378 360l6 94M414 348l10-14 60-6v20l-66 6zM492 316v32M390 350h20M500 348l-10-2M510 346c20 2 36-10 50-26l20-30 44-38M500 346h24l110-84M590 256h30M588 256l26-8 14 6M620 218l6 30M632 260l-8-10" strokeWidth="3" />
        <path d="M374 390v60M380 410v40M385 356l28-3M430 331l50-5" strokeWidth="5" strokeDasharray="4 4" />
        <path d="M640 118c40-2 46 6 44 28-2 30-8 70-26 94l-10 8-8-8M682 254c14-40 14-60 18-96 2-14 16-12 20-4M714 150l14 18M720 160h12M708 168l-4 22M688 212l8-6M672 178h8M662 206h6M648 230h6M664 252h8M708 126v4M650 66v24l-16 4M670 60v4M670 76v4M698 60l6 36 8 16h14" strokeWidth="3" />
        <path d="M672 178h8M662 206h6M648 230h6M664 252h8M688 212h8M704 184h8M704 170h8" strokeWidth="6" />
        <path d="M682 256L722 642 108 714 78 628M92 714h20M110 714l16-20M704 628l18 14" strokeWidth="3.500" />
        <path d="M668 622h54M96 692h26M132 692h22" strokeWidth="6" strokeDasharray="9 2" />
        <path d="M422 466l16-16 8 8-16 10zM362 462l14 4M366 472l8-12M146 566v14M144 576l8-10M450 382h4M486 420v6M584 338v6M636 284h20l6-4M646 282l12 6" />
        <path d="M540 362l60-50M440 442l90-72M610 306l40-26" strokeWidth="6" strokeDasharray="18 6" />
      </g>

      {/* UCS icon */}
      <g stroke="#c5c9cc" strokeWidth="1">
        <path d="M9.500 656.500h6v6h-6zM12.500 624v36M12 660.500h36" />
      </g>
    </svg>
  );
}

function FloatingToolbar() {
  return (
    <div className="absolute top-px left-1/2 -ml-[40px] flex h-[18px] items-start bg-[#6b6d70] pr-[5px] pl-[5px]">
      <div className="flex h-4 items-center gap-[3px] border border-white bg-[#ededed] pl-px">
        {[
          "M2 10h10M7 6l4 1-4 3M2 4h4M2 2v10",
          "M3 2v10M3 3h8v2H3M5 7h6v2H5M3 11h8",
          "M2 2l3 9h7M7 9V3h4l-4 3 4 3",
          "M2 11V7h3V4h4v7M9 6h3v5M2 11h10M7 4v7",
          "M2 1v12M1 11h12M12 3v10M1 3h12M5 5l3 4M8 5L5 9",
          "M7 1a6 6 0 1 0 .1 0M1 7h12M7 1v12M2 4h10M2 10h10M7 1c-4 3-4 9 0 12M7 1c4 3 4 9 0 12",
          "M2 2v10h10V2zM7 8h4v3H7z",
        ].map((d) => (
          <button key={d} type="button" aria-label="RgsPl" className="flex h-[13px] w-[14px] items-center">
            <svg viewBox="0 0 14 14" className="h-[13px] w-[13px]" fill="none" stroke="#0b4d10" strokeWidth="1.100" aria-hidden="true">
              <path d="M1 1h12v12H1z" fill="#35e23a" stroke="none" />
              <path d={d} />
            </svg>
          </button>
        ))}
        <span className="h-3 w-px bg-[#aaa]" />
        <button type="button" aria-label="Карандаш" className="flex h-[13px] w-[13px] items-center">
          <svg viewBox="0 0 14 14" className="h-[13px] w-[13px]" fill="none" stroke="#16340f" strokeWidth="1.200" aria-hidden="true">
            <path d="M1 1h12v12H1z" fill="#7ed636" stroke="none" />
            <path d="M2 8l5-6 4 1-7 9zM7 13l6-8" /><path d="M5 11l6-7M9 12l3-4" stroke="#f1e24a" />
          </svg>
        </button>
      </div>
      <button type="button" aria-label="Закрыть" className="absolute top-0 right-0 text-[8px] leading-2 text-white">×</button>
    </div>
  );
}

function ViewCube() {
  return (
    <div className="absolute top-[10px] right-[14px] flex w-[92px] flex-col items-center font-['Open_Sans',sans-serif] text-[14px] leading-[18px] text-[#b9bdc1]">
      <div className="relative flex h-[100px] w-full flex-col items-center justify-between">
        <span className="absolute top-[6px] left-[2px] h-[88px] w-[88px] rounded-full border-8 border-[#474e56]" />
        <span className="relative">С</span>
        <div className="relative flex w-full items-center justify-between">
          <span>З</span>
          <button type="button" className="flex h-[38px] w-[38px] items-center justify-center border-2 border-[#c3c6c9] bg-[#aaafb5] font-['Roboto',sans-serif] text-[10px] text-[#333a42]">Верх</button>
          <span>В</span>
        </div>
        <span className="relative">Ю</span>
      </div>
      <button type="button" className="mt-[14px] h-3 w-[35px] rounded-[3px] border border-[#9ca0a4] bg-[#8a8f94] pl-[2px] text-left text-[8px] leading-[9px] text-[#e4e6e8]">МСК</button>
    </div>
  );
}

function NavBar() {
  return (
    <div className="absolute top-[155px] right-px flex h-[156px] w-6 items-center justify-center rounded-[3px] border border-[#6e747a] bg-[#60666d]">
      <svg viewBox="0 0 24 156" className="h-[154px] w-[22px]" fill="none" stroke="#4b5158" aria-hidden="true">
        <path d="M18 4l3 2M18 6l3-2M18 151h4" />
        <circle cx="12" cy="22" r="7" /><circle cx="12" cy="22" r="3" /><path d="M5 22h4M15 22h4" />
        <path d="M6 56c-2-4 0-5 2-2v-6c1-2 2 0 2 3v-5c1-2 2 0 2 4v-4c1-2 3 0 2 5l2-2c2 0 0 8-2 12-2 3-6 2-8-5z" />
        <path d="M5 68l12 14M17 68L5 82" /><circle cx="16" cy="79" r="3" />
        <path d="M3 102h18M12 92v20M9 95l3-3 3 3M9 109l3 3 3-3" />
        <path d="M4 126h14v14H4zM7 130h8v6H7z" />
        <path d="M11 37h2M11 88h2M11 117h2" strokeWidth="2" />
      </svg>
    </div>
  );
}

function Arrow({ direction }: { direction: "up" | "down" | "left" | "right" }) {
  const paths = { up: "M0 5H6L3 1Z", down: "M0 1H6L3 5Z", left: "M5 0V6L1 3Z", right: "M1 0V6L5 3Z" };
  return (
    <svg viewBox="0 0 6 6" className="h-[5px] w-[5px]" fill="#333" aria-hidden="true">
      <path d={paths[direction]} />
    </svg>
  );
}

function Workspace() {
  return (
    <main className="flex min-h-0 flex-1">
      <div className="relative min-w-0 flex-1 overflow-hidden bg-[#202830]">
        <Drawing />
        <FloatingToolbar />
        <ViewCube />
        <NavBar />
        <span className="absolute bottom-[50px] left-[12px] text-[14px] leading-4 font-light text-[#c5c9cc]">Y</span>
        <span className="absolute bottom-[11px] left-[52px] text-[14px] leading-4 font-light text-[#c5c9cc]">X</span>
      </div>
      <div className="flex w-[15px] flex-col items-center justify-between border-r-2 border-[#d5d5d5] bg-[#f3f3f3] py-1">
        <Arrow direction="up" />
        <span className="-mt-[42px] h-3 w-[11px] rounded-[1px] border border-[#999] bg-linear-to-b from-white to-[#d5d5d5]" />
        <Arrow direction="down" />
      </div>
    </main>
  );
}

function LayoutTabs() {
  return (
    <div className="flex h-[13px] items-center bg-[#f0f1f2] font-['Liberation_Sans',sans-serif] text-[9px] text-[#222]">
      <div className="flex h-full w-[43px] text-[#333]">
        {["M2 1v6M7 1v6L3 4z", "M6 1v6L2 4z", "M2 1v6l4-3z", "M7 1v6M2 1v6l4-3z"].map((d) => (
          <button key={d} type="button" aria-label="Листы" className="flex flex-1 items-center justify-center border-r border-[#b5b5b5]">
            <svg viewBox="0 0 8 8" className="h-[7px] w-[7px]" fill="currentColor" stroke="currentColor" strokeWidth=".4" aria-hidden="true"><path d={d} /></svg>
          </button>
        ))}
      </div>
      <button type="button" className="h-full w-[45px] bg-[#202830] text-center leading-[13px] text-white [clip-path:polygon(0_0,100%_0,calc(100%-5px)_100%,5px_100%)]">Модель</button>
      <button type="button" className="h-full px-1 leading-[13px]">Лист1</button>
      <svg viewBox="0 0 5 13" className="h-[13px] w-[5px]" stroke="#444" aria-hidden="true"><path d="M5 0L0 13" /></svg>
      <button type="button" className="h-full px-[3px] leading-[13px]">Лист2</button>
      <svg viewBox="0 0 5 13" className="h-[13px] w-[5px]" stroke="#444" aria-hidden="true"><path d="M5 0L0 13" /></svg>
      <div className="ml-auto flex h-full w-[446px] items-center border-l border-[#aaa] bg-[#eceeee] pr-[18px] pl-[7px]">
        <Arrow direction="left" />
        <span className="mr-[6px] ml-auto h-[9px] w-[11px] border border-[#999] bg-linear-to-b from-white to-[#cfcfcf]" />
        <Arrow direction="right" />
      </div>
    </div>
  );
}

function CommandLine() {
  return (
    <section className="border-y-2 border-t-4 border-[#6b6b6b] bg-white font-['Liberation_Mono',monospace] text-[10px] text-[#111]">
      <div className="flex h-[42px] border-l-8 border-[#a3a3a3]">
        <div className="flex min-w-0 flex-1 flex-col">
          <div className="flex h-[29px] justify-between border-b border-[#c5c5c5]">
            <p className="pt-px pl-px leading-3">
              линий/Прозрачность/Материал/пеЧать/Заморозить/Разморозить/Блок/рАзблок/Конфигура
              <br />
              ция/опИсание/соГласовать]:
            </p>
            <div className="flex w-[13px] flex-col items-center justify-between bg-[#f1f1f1] py-1">
              <Arrow direction="up" />
              <Arrow direction="down" />
            </div>
          </div>
          <div className="flex h-[13px] items-center">
            <label htmlFor="command" className="pt-px pl-px">Команда:</label>
            <input id="command" type="text" className="h-3 min-w-0 flex-1 outline-none" />
            <div className="flex h-full w-[63px] items-center justify-between bg-[#efefef] pr-[18px] pl-[5px]">
              <Arrow direction="left" />
              <span className="mr-[9px] h-[10px] w-[11px] border border-[#999] bg-linear-to-b from-white to-[#cfcfcf]" />
              <Arrow direction="right" />
            </div>
          </div>
        </div>
      </div>
    </section>
  );
}

export default function App() {
  return (
    <div className="flex h-screen flex-col overflow-hidden bg-[#6b6b6b] font-['Roboto','Open_Sans',sans-serif] text-[9px] text-[#444]">
      <div className="relative shrink-0">
        <TitleBar />
        <MenuBar />
        <button type="button" aria-label="Меню приложения" className="absolute top-0 left-0 h-[29px] w-7 border border-l-0 border-[#777] bg-linear-to-b from-[#d5d5d5] to-[#a2a2a2]">
          <svg viewBox="0 0 27 28" className="h-[27px] w-[27px]" fill="none" aria-hidden="true">
            <path d="M0 2h5l3 2 8-1v4H9l-1 3 6 4 3 7-6 1-3-7-8-5z" fill="#b3242a" />
            <path d="M1 4l5 2 8-1M7 11l7 5" stroke="#e2575a" strokeWidth="1.500" />
            <path d="M0 18l6-3 3 3-6 4H0z" fill="#8d171c" />
            <path d="M19 11h5l-2.500 3z" fill="#222" />
          </svg>
          <span className="absolute right-[2px] bottom-px text-[7px] leading-[7px] font-bold text-[#222]">3D</span>
        </button>
        <RibbonTabs />
        <Ribbon />
        <div className="h-[5px] border-b border-[#8a8a8a] bg-[#666]" />
      </div>
      <Workspace />
      <LayoutTabs />
      <CommandLine />
    </div>
  );
}
